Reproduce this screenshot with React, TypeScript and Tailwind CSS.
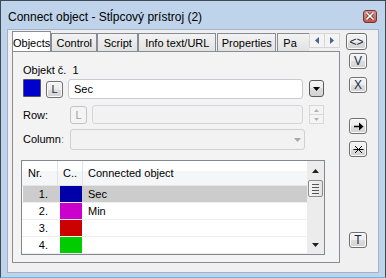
import React from "react";

const btnBg =
  "bg-[linear-gradient(#f4f4f4_0%,#ececec_50%,#dedede_50%,#d2d2d2_100%)]";

function SmallBtn({ children, className = "" }: { children: React.ReactNode; className?: string }) {
  return (
    <div
      className={`flex items-center justify-center rounded-[3px] border border-[#707070] ${btnBg} leading-none text-[#1b2a4a] shadow-[inset_0_0_0_1px_#fbfbfb] ${className}`}
    >
      {children}
    </div>
  );
}

function Tab({ label, w, sel = false, className = "" }: { label: string; w: string; sel?: boolean; className?: string }) {
  if (sel) {
    return (
      <div
        className={`relative z-10 -mb-px flex h-[21px] items-start justify-center border border-b-0 border-[#898c95] bg-white pt-[3px] ${w} ${className}`}
      >
        {label}
      </div>
    );
  }
  return (
    <div
      className={`flex h-[18px] shrink-0 items-center justify-center overflow-hidden whitespace-nowrap border border-b-0 border-[#898c95] bg-[linear-gradient(#f3f3f3,#e2e2e2)] pt-[1px] ${w} ${className}`}
    >
      {label}
    </div>
  );
}

const rows = [
  { n: "1.", c: "#0000a8", t: "Sec", sel: true },
  { n: "2.", c: "#cc00cc", t: "Min", sel: false },
  { n: "3.", c: "#cc0000", t: "", sel: false },
  { n: "4.", c: "#00cc00", t: "", sel: false },
];

export default function App() {
  return (
    <div className="flex h-[278px] w-[386px] flex-col overflow-hidden border border-[#3f4a57] border-b-[#63b8e8] bg-[#bfd4eb] font-['Liberation_Sans',Arial,sans-serif] text-[11px] text-black">
      {/* Title bar */}
      <div className="flex h-[28px] shrink-0 items-center justify-between pl-[7px] pr-[8px] pt-[3px]">
        <span className="text-[12px] leading-none">Connect object - Stĺpcový prístroj (2)</span>
        <div className="mb-[1px] flex h-[13px] w-[14px] items-center justify-center rounded-[3px] border border-[#6e3630] bg-[linear-gradient(#dd958c,#c35546)]">
          <svg width="8" height="8" viewBox="0 0 8 8">
            <path d="M1 1 L7 7 M7 1 L1 7" stroke="#5a2a25" strokeWidth="3" strokeLinecap="square" />
            <path d="M1 1 L7 7 M7 1 L1 7" stroke="#ffffff" strokeWidth="1.6" strokeLinecap="square" />
          </svg>
        </div>
      </div>

      {/* Client area */}
      <div className="mx-[6px] flex h-[244px] shrink-0 border border-[#9fb3c9] bg-[#f0f0f0]">
        {/* Tab control */}
        <div className="ml-[4px] mt-[1px] flex w-[328px] flex-col">
          <div className="flex h-[20px] items-end">
            <div className="flex w-[297px] items-end overflow-hidden">
              <Tab label="Objects" w="w-[54px]" sel />
              <Tab label="Control" w="w-[46px]" className="ml-0" />
              <Tab label="Script" w="w-[41px]" />
              <Tab label="Info text/URL" w="w-[78px]" />
              <Tab label="Properties" w="w-[59px]" className="ml-[1px]" />
              <div className="ml-[1px] flex h-[18px] w-[40px] shrink-0 items-center border border-b-0 border-[#898c95] bg-[linear-gradient(#f3f3f3,#e2e2e2)] pl-[5px] pt-[1px]">
                Pa
              </div>
            </div>
            <div className="mb-[3px] flex h-[15px] w-[31px] self-end border border-[#d6d6d6] bg-[#f4f4f4]">
              <div className="flex flex-1 items-center justify-center border-r border-[#d6d6d6]">
                <svg width="4" height="7" viewBox="0 0 4 7">
                  <path d="M4 0 L0 3.5 L4 7 Z" fill="#4f6289" />
                </svg>
              </div>
              <div className="flex flex-1 items-center justify-center">
                <svg width="4" height="7" viewBox="0 0 4 7">
                  <path d="M0 0 L4 3.5 L0 7 Z" fill="#4f6289" />
                </svg>
              </div>
            </div>
          </div>

          {/* Tab panel */}
          <div className="flex h-[212px] flex-col border border-[#898c95] bg-[#f3f3f3] pl-[10px] pt-[11px]">
            <div className="h-[14px] leading-[14px]">Objekt č.&nbsp;&nbsp;1</div>

            {/* Row 1 */}
            <div className="mt-[2px] flex h-[20px] items-start">
              <div className="h-[18px] w-[18px] rounded-[1px] border border-[#555555] bg-[#0000cc]" />
              <SmallBtn className="ml-[5px] mt-[2px] h-[17px] w-[17px] text-[11px]">L</SmallBtn>
              <div className="ml-[5px] flex h-[20px] w-[235px] items-center rounded-[3px] border border-[#c9cacf] bg-white pl-[5px]">
                Sec
              </div>
              <div className={`ml-[6px] mt-[1px] flex h-[17px] w-[15px] items-center justify-center rounded-[3px] border border-[#5b5b5b] ${btnBg}`}>
                <svg width="7" height="4" viewBox="0 0 7 4">
                  <path d="M0 0 L7 0 L3.5 4 Z" fill="#000" />
                </svg>
              </div>
            </div>

            {/* Row 2 */}
            <div className="mt-[6px] flex h-[19px] items-start">
              <div className="w-[47px] pt-[5px] leading-none">Row:</div>
              <div className="mt-[1px] flex h-[18px] w-[17px] items-center justify-center rounded-[3px] border border-[#c4c4c4] bg-[#f4f4f4] text-[#a0a0a0]">
                L
              </div>
              <div className="ml-[5px] h-[19px] w-[211px] rounded-[3px] border border-[#d5d5d5] bg-[#f2f2f2]" />
              <div className="ml-[6px] flex h-[19px] w-[15px] flex-col border border-[#d8d8d8] bg-[#f4f4f4]">
                <div className="flex flex-1 items-center justify-center border-b border-[#d8d8d8]">
                  <svg width="5" height="3" viewBox="0 0 5 3">
                    <path d="M0 3 L5 3 L2.5 0 Z" fill="#b0b0b0" />
                  </svg>
                </div>
                <div className="flex flex-1 items-center justify-center">
                  <svg width="5" height="3" viewBox="0 0 5 3">
                    <path d="M0 0 L5 0 L2.5 3 Z" fill="#b0b0b0" />
                  </svg>
                </div>
              </div>
            </div>

            {/* Row 3 */}
            <div className="mt-[5px] flex h-[21px] items-start">
              <div className="w-[47px] pt-[5px] leading-none">
                Column<span className="text-[#8a8a8a]">:</span>
              </div>
              <div className="flex h-[21px] w-[235px] items-center justify-end rounded-[3px] border border-[#d0d0d0] bg-[#f2f2f2] pr-[3px]">
                <svg width="7" height="4" viewBox="0 0 7 4">
                  <path d="M0 0 L7 0 L3.5 4 Z" fill="#a8a8a8" />
                </svg>
              </div>
            </div>

            {/* Table */}
            <div className="ml-[-2px] mt-[10px] flex h-[95px] w-[304px] border border-[#828790] bg-white">
              <div className="flex w-[285px] flex-col">
                <div className="flex h-[25px] shrink-0 border-b border-[#e5e5e5] bg-[linear-gradient(#ffffff_0%,#ffffff_40%,#f5f6f7_40%,#f5f6f7_100%)]">
                  <div className="flex w-[36px] items-center border-r border-[#e3e3e3] pl-[6px]">Nr.</div>
                  <div className="flex w-[25px] items-center border-r border-[#e3e3e3] pl-[5px]">C..</div>
                  <div className="flex flex-1 items-center pl-[5px]">Connected object</div>
                </div>
                {rows.map((r) => (
                  <div key={r.n} className="flex h-[17px] shrink-0 border-b border-[#eeeeee]">
                    <div className={`ml-[1px] flex flex-1 ${r.sel ? "bg-[#cccccc]" : ""}`}>
                      <div className="flex w-[35px] items-center justify-end pr-[10px]">{r.n}</div>
                      <div className="w-[25px] pl-[2px]">
                        <div className="h-[16px] w-[22px]" style={{ backgroundColor: r.c }} />
                      </div>
                      <div className="flex flex-1 items-center pl-[5px]">{r.t}</div>
                    </div>
                  </div>
                ))}
              </div>
              {/* scrollbar */}
              <div className="flex w-[17px] flex-col items-center bg-[#ececec]">
                <div className="flex h-[19px] w-full items-center justify-center">
                  <svg width="7" height="4" viewBox="0 0 7 4">
                    <path d="M0 4 L7 4 L3.5 0 Z" fill="#222" />
                  </svg>
                </div>
                <div className="flex h-[17px] w-[15px] flex-col items-center justify-center gap-[2px] rounded-[2px] border border-[#8d8d8d] bg-[linear-gradient(90deg,#f4f4f4,#e4e4e4)]">
                  <div className="h-px w-[7px] bg-[#555]" />
                  <div className="h-px w-[7px] bg-[#555]" />
                  <div className="h-px w-[7px] bg-[#555]" />
                  <div className="h-px w-[7px] bg-[#555]" />
                </div>
                <div className="flex-1" />
                <div className="flex h-[19px] w-full items-center justify-center">
                  <svg width="7" height="4" viewBox="0 0 7 4">
                    <path d="M0 0 L7 0 L3.5 4 Z" fill="#222" />
                  </svg>
                </div>
              </div>
            </div>
          </div>
        </div>

        {/* Right button column */}
        <div className="ml-[6px] flex w-[21px] flex-col items-end">
          <SmallBtn className="mt-[3px] h-[17px] w-[21px] text-[12px]">&lt;&gt;</SmallBtn>
          <SmallBtn className="mt-[3px] h-[16px] w-[18px] text-[12px]">V</SmallBtn>
          <SmallBtn className="mt-[8px] h-[16px] w-[18px] text-[12px]">X</SmallBtn>
          <SmallBtn className="mt-[25px] h-[16px] w-[18px]">
            <svg width="11" height="9" viewBox="0 0 11 9">
              <path d="M1 4.5 L7 4.5" stroke="#000" strokeWidth="1.5" />
              <path d="M6 0.5 L10.5 4.5 L6 8.5 Z" fill="#000" />
            </svg>
          </SmallBtn>
          <SmallBtn className="mt-[7px] h-[16px] w-[18px]">
            <svg width="11" height="9" viewBox="0 0 11 9">
              <path d="M0.5 4.5 L10.5 4.5 M2 1 L9 8 M9 1 L2 8" stroke="#000" strokeWidth="1" />
            </svg>
          </SmallBtn>
          <SmallBtn className="mt-[75px] h-[16px] w-[18px] text-[12px]">T</SmallBtn>
        </div>
      </div>
    </div>
  );
}
